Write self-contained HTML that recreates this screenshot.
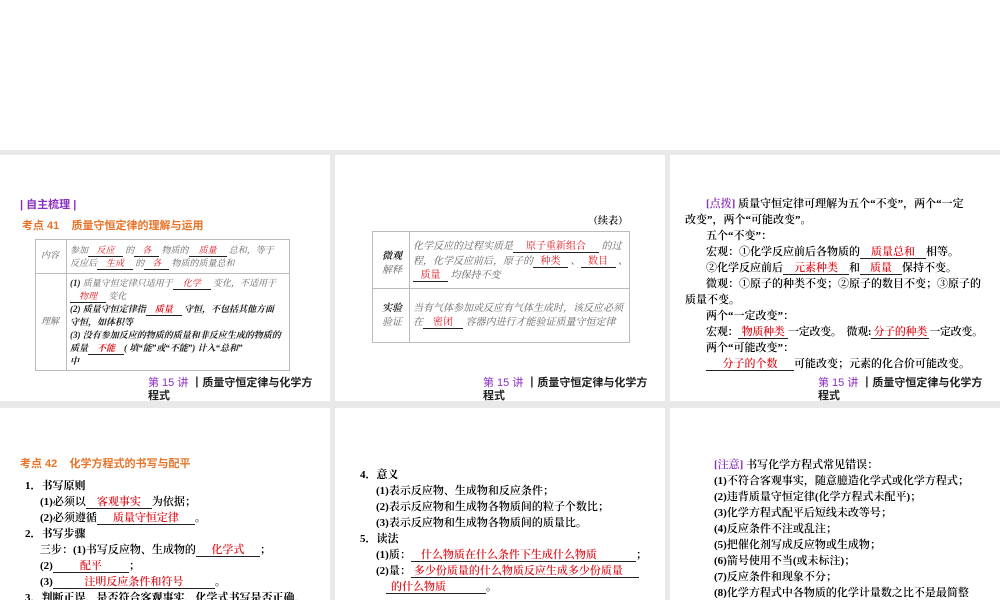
<!DOCTYPE html>
<html><head><meta charset="utf-8"><style>
*{margin:0;padding:0;box-sizing:border-box}
body{width:1000px;height:600px;background:#fff;position:relative;overflow:hidden;font-family:"Liberation Serif","Noto Serif CJK SC","Noto Sans CJK SC",serif;color:#000}
.bg{position:absolute;left:0;top:150px;width:1000px;height:450px;background:#e9e9e9}
.s{position:absolute;background:#fff;overflow:hidden}
.t{position:absolute;white-space:nowrap;font-size:11px;line-height:14px;font-weight:600}
.u{display:inline-block;border-bottom:1px solid #222;color:#e0161e;text-align:center;line-height:11px;vertical-align:baseline}
.p{color:#8a2fc2}
.o{color:#e8742a;font-weight:bold;font-family:"Liberation Sans","Noto Sans CJK SC",sans-serif}
.ft{position:absolute;font-size:11px;line-height:13px;width:175px;white-space:normal;font-family:"Liberation Sans","Noto Sans CJK SC",sans-serif}
.ft b{font-weight:bold;color:#222}
.tb{position:absolute;border:1px solid #bbb}
.i{font-style:italic;color:#666;font-size:9px;line-height:13px;font-weight:normal}
.ib{font-style:italic;color:#222;font-weight:bold;font-size:9px;line-height:13px}
.bd{font-weight:bold}
</style></head><body>
<div class="bg"></div>

<!-- slide 1 -->
<div class="s" style="left:0;top:155px;width:330px;height:246px">
 <div class="t p" style="left:20px;top:43px;font-family:'Liberation Sans','Noto Sans CJK SC',sans-serif">| 自主梳理 |</div>
 <div class="t o" style="left:22px;top:64px">考点 41 &nbsp;&nbsp; 质量守恒定律的理解与运用</div>
 <div class="tb" style="left:35px;top:84px;width:255px;height:132px"></div>
 <div style="position:absolute;left:35px;top:118px;width:255px;border-top:1px solid #bbb"></div>
 <div style="position:absolute;left:66px;top:84px;height:132px;border-left:1px solid #bbb"></div>
 <div class="t i" style="left:41px;top:94px">内容</div>
 <div class="t i" style="left:41px;top:160px">理解</div>
 <div class="t i" style="left:70px;top:89px">参加<span class="u" style="width:35px">反应</span> 的<span class="u" style="width:25px">各</span> 物质的<span class="u" style="width:38px">质量</span> 总和，等于</div>
 <div class="t i" style="left:70px;top:102px">反应后<span class="u" style="width:36px">生成</span> 的<span class="u" style="width:25px">各</span> 物质的质量总和</div>
 <div class="t i" style="left:70px;top:122px"><b style="color:#222">(1)</b> 质量守恒定律只适用于<span class="u" style="width:38px">化学</span> 变化，不适用于</div>
 <div class="t i" style="left:70px;top:135px"><span class="u" style="width:36px">物理</span> 变化</div>
 <div class="t ib" style="left:70px;top:148px">(2) 质量守恒定律指<span class="u" style="width:36px">质量</span> 守恒，不包括其他方面</div>
 <div class="t ib" style="left:70px;top:161px">守恒，如体积等</div>
 <div class="t ib" style="left:70px;top:174px">(3) 没有参加反应的物质的质量和非反应生成的物质的</div>
 <div class="t ib" style="left:70px;top:187px">质量<span class="u" style="width:36px">不能</span>( 填“能”或“不能”) 计入“总和”</div>
 <div class="t ib" style="left:70px;top:200px">中</div>
 <div class="ft" style="left:148px;top:222px"><span class="p">第 15 讲</span> <b>┃质量守恒定律与化学方程式</b></div>
</div>

<!-- slide 2 -->
<div class="s" style="left:335px;top:155px;width:330px;height:246px">
 <div class="t" style="left:253px;top:60px;font-size:10px">（续表）</div>
 <div class="tb" style="left:37px;top:76px;width:258px;height:112px"></div>
 <div style="position:absolute;left:37px;top:133px;width:258px;border-top:1px solid #bbb"></div>
 <div style="position:absolute;left:74px;top:76px;height:112px;border-left:1px solid #bbb"></div>
 <div class="t ib" style="left:47px;top:95px;font-size:10px">微观</div>
 <div class="t i" style="left:47px;top:109px;font-size:10px">解释</div>
 <div class="t ib" style="left:47px;top:147px;font-size:10px">实验</div>
 <div class="t i" style="left:47px;top:161px;font-size:10px">验证</div>
 <div class="t i" style="left:78px;top:85px;font-size:10px;line-height:14px">化学反应的过程实质是<span class="u" style="width:86px;font-style:normal">原子重新组合</span> 的过</div>
 <div class="t i" style="left:78px;top:100px;font-size:10px;line-height:14px">程，化学反应前后，原子的<span class="u" style="width:35px;font-style:normal">种类</span> 、<span class="u" style="width:35px;font-style:normal">数目</span> 、</div>
 <div class="t i" style="left:78px;top:114px;font-size:10px;line-height:14px"><span class="u" style="width:35px;font-style:normal">质量</span> 均保持不变</div>
 <div class="t i" style="left:78px;top:147px;font-size:10px;line-height:14px">当有气体参加或反应有气体生成时，该反应必须</div>
 <div class="t i" style="left:78px;top:161px;font-size:10px;line-height:14px">在<span class="u" style="width:40px;font-style:normal">密闭</span> 容器内进行才能验证质量守恒定律</div>
 <div class="ft" style="left:148px;top:222px"><span class="p">第 15 讲</span> <b>┃质量守恒定律与化学方程式</b></div>
</div>

<!-- slide 3 -->
<div class="s" style="left:670px;top:155px;width:330px;height:246px">
 <div class="t" style="left:36px;top:42px"><span class="p">[点拨]</span> 质量守恒定律可理解为五个“不变”，两个“一定</div>
 <div class="t" style="left:15px;top:58px">改变”，两个“可能改变”。</div>
 <div class="t" style="left:36px;top:74px">五个“不变”：</div>
 <div class="t" style="left:36px;top:90px">宏观：①化学反应前后各物质的<span class="u" style="width:66px">质量总和</span>相等。</div>
 <div class="t" style="left:36px;top:106px">②化学反应前后<span class="u" style="width:66px">元素种类</span>和<span class="u" style="width:42px">质量</span>保持不变。</div>
 <div class="t" style="left:36px;top:122px">微观：①原子的种类不变；②原子的数目不变；③原子的</div>
 <div class="t" style="left:15px;top:138px">质量不变。</div>
 <div class="t" style="left:36px;top:154px">两个“一定改变”：</div>
 <div class="t" style="left:36px;top:170px;letter-spacing:-0.3px">宏观：<span class="u" style="width:50px">物质种类</span>一定改变。&nbsp; 微观:<span class="u" style="width:58px">分子的种类</span>一定改变。</div>
 <div class="t" style="left:36px;top:186px">两个“可能改变”：</div>
 <div class="t" style="left:36px;top:202px"><span class="u" style="width:88px">分子的个数</span>可能改变；元素的化合价可能改变。</div>
 <div class="ft" style="left:148px;top:222px"><span class="p">第 15 讲</span> <b>┃质量守恒定律与化学方程式</b></div>
</div>

<!-- slide 4 -->
<div class="s" style="left:0;top:408px;width:330px;height:192px">
 <div class="t o" style="left:20px;top:49px">考点 42 &nbsp;&nbsp; 化学方程式的书写与配平</div>
 <div class="t bd" style="left:25px;top:71px">1．书写原则</div>
 <div class="t" style="left:40px;top:87px"><b>(1)</b>必须以<span class="u" style="width:66px">客观事实</span>为依据；</div>
 <div class="t" style="left:40px;top:103px"><b>(2)</b>必须遵循<span class="u" style="width:98px">质量守恒定律</span>。</div>
 <div class="t bd" style="left:25px;top:119px">2．书写步骤</div>
 <div class="t" style="left:40px;top:135px">三步：<b>(1)</b>书写反应物、生成物的<span class="u" style="width:64px">化学式</span>；</div>
 <div class="t" style="left:40px;top:151px"><b>(2)</b><span class="u" style="width:76px">配平</span>；</div>
 <div class="t" style="left:40px;top:167px"><b>(3)</b><span class="u" style="width:162px">注明反应条件和符号</span>。</div>
 <div class="t bd" style="left:25px;top:183px">3．判断正误，是否符合客观事实，化学式书写是否正确，</div>
</div>

<!-- slide 5 -->
<div class="s" style="left:335px;top:408px;width:330px;height:192px">
 <div class="t bd" style="left:25px;top:60px">4．意义</div>
 <div class="t" style="left:41px;top:76px"><b>(1)</b>表示反应物、生成物和反应条件；</div>
 <div class="t" style="left:41px;top:92px"><b>(2)</b>表示反应物和生成物各物质间的粒子个数比；</div>
 <div class="t" style="left:41px;top:108px"><b>(3)</b>表示反应物和生成物各物质间的质量比。</div>
 <div class="t bd" style="left:25px;top:124px">5．读法</div>
 <div class="t" style="left:41px;top:140px"><b>(1)</b>质：<span class="u" style="width:225px;text-align:left;padding-left:10px">什么物质在什么条件下生成什么物质</span>；</div>
 <div class="t" style="left:41px;top:156px"><b>(2)</b>量：<span class="u" style="width:228px;text-align:left;padding-left:3px">多少份质量的什么物质反应生成多少份质量</span></div>
 <div class="t" style="left:51px;top:172px"><span class="u" style="width:100px;text-align:left;padding-left:5px">的什么物质</span>。</div>
</div>

<!-- slide 6 -->
<div class="s" style="left:670px;top:408px;width:330px;height:192px">
 <div class="t" style="left:44px;top:50px"><span class="p">[注意]</span> 书写化学方程式常见错误：</div>
 <div class="t" style="left:44px;top:66px"><b>(1)</b>不符合客观事实，随意臆造化学式或化学方程式；</div>
 <div class="t" style="left:44px;top:82px"><b>(2)</b>违背质量守恒定律(化学方程式未配平)；</div>
 <div class="t" style="left:44px;top:98px"><b>(3)</b>化学方程式配平后短线未改等号；</div>
 <div class="t" style="left:44px;top:114px"><b>(4)</b>反应条件不注或乱注；</div>
 <div class="t" style="left:44px;top:130px"><b>(5)</b>把催化剂写成反应物或生成物；</div>
 <div class="t" style="left:44px;top:146px"><b>(6)</b>箭号使用不当(或未标注)；</div>
 <div class="t" style="left:44px;top:162px"><b>(7)</b>反应条件和现象不分；</div>
 <div class="t" style="left:44px;top:178px"><b>(8)</b>化学方程式中各物质的化学计量数之比不是最简整</div>
</div>
</body></html>
